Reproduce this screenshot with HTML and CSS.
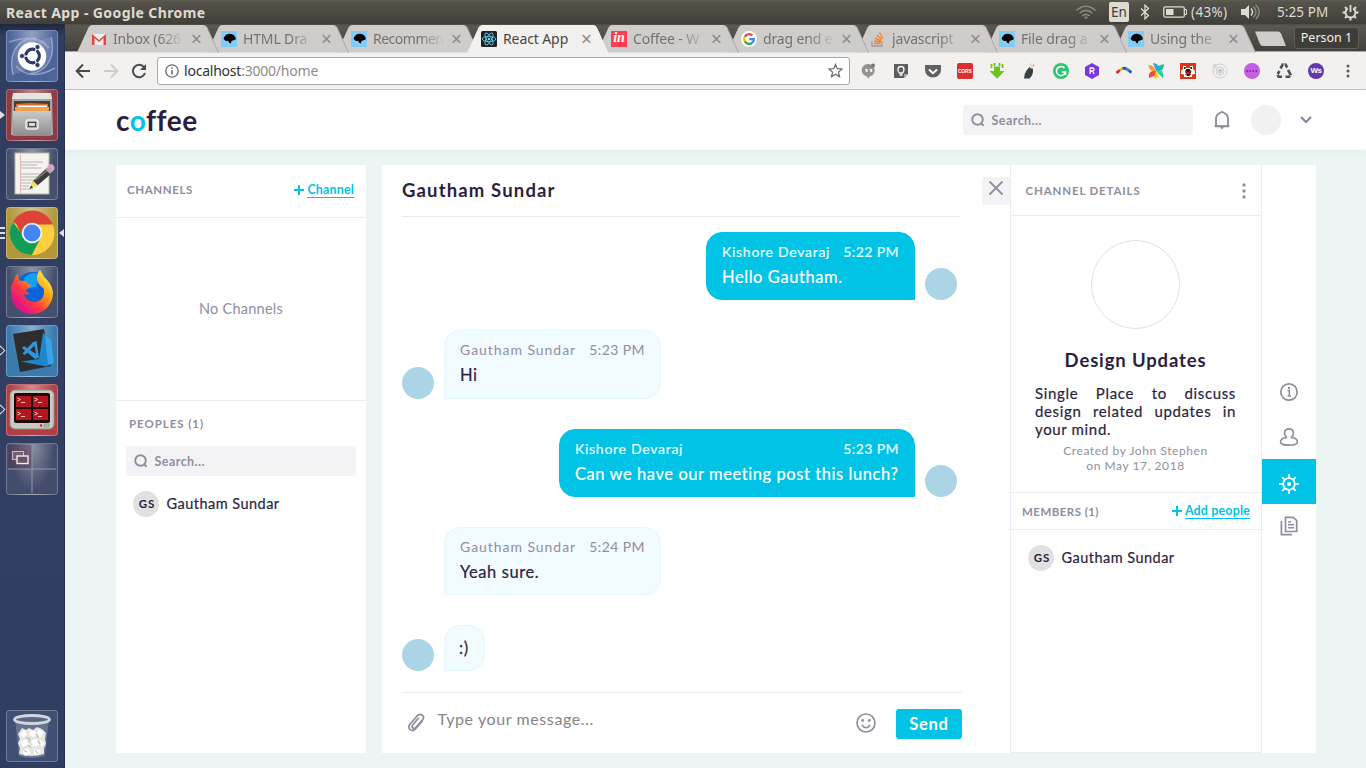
FILE: index.html
```html
<!DOCTYPE html>
<html lang="en">
<head>
<meta charset="utf-8">
<title>React App</title>
<link rel="stylesheet" href="styles.css">
</head>
<body>
<svg class="defs" aria-hidden="true">
  <symbol id="dino" viewBox="0 0 16 16"><rect width="16" height="16" fill="#83cbf7"/><path d="M2.500 7.500 4 5l2-1.700 3-.5 3.500 1 2 2.500.2 2.200-2.200.7-2 .8-.8 2.500-1.700-1-.8-1.800-2 .2-1.700-.8z" fill="#000"/></symbol>
  <symbol id="search" viewBox="0 0 14 14"><circle cx="6.500" cy="6.500" r="5.300" fill="none" stroke="#918e9e" stroke-width="1.900"/><path d="m10 10 2.600 2.800" stroke="#918e9e" stroke-width="1.900"/></symbol>
  <symbol id="plus" viewBox="0 0 10 10"><path d="M5 0v10M0 5h10" stroke="#00c3e6" stroke-width="2"/></symbol>
  <symbol id="tab" viewBox="0 0 142 28"><path d="M0 27.500 11.500 2.500Q12.700 0 15 0H126.500Q129 0 130 2.500L141.500 27.500z" fill="#cfcdcb"/><path d="M126.500.5Q129 .5 130 2.500L141.500 27.500" fill="none" stroke="#aaa8a5"/></symbol>
</svg>

<header class="sysbar">
  <span class="sysbar-title">React App - Google Chrome</span>
  <div class="sysbar-status">
    <svg class="st-wifi" width="22" height="16" viewBox="0 0 22 16" fill="none" stroke="#8b8982" stroke-width="1.500"><path d="M1.500 6.500Q11-2 20.500 6.500M4.500 9.300Q11 3.500 17.500 9.300M7.300 12Q11 8.800 14.700 12"/><path d="m9 13.200 2 2 2-2q-2-1.500-4 0z" fill="#8b8982" stroke="none"/></svg>
    <span class="lang">En</span>
    <svg class="st-bt" width="10" height="16" viewBox="0 0 10 16" fill="none" stroke="#dfdbd2" stroke-width="1.300"><path d="M1 4.500 8.500 11.500 5 14.800V1.200L8.500 4.500 1 11.500"/></svg>
    <svg class="st-bat" width="25" height="12" viewBox="0 0 25 12"><rect x=".8" y=".8" width="20.500" height="10.400" rx="1.500" fill="none" stroke="#dfdbd2" stroke-width="1.300"/><rect x="3" y="3" width="7.500" height="6" fill="#dfdbd2"/><path d="M22 3.500h1.500v5H22" fill="none" stroke="#dfdbd2"/></svg>
    <span class="st-pct">(43%)</span>
    <svg class="st-vol" width="20" height="16" viewBox="0 0 20 16"><path d="M0 5h4l4-4v14l-4-4H0z" fill="#dfdbd2"/><path d="M10 4.500q3 3.500 0 7" fill="none" stroke="#dfdbd2" stroke-width="1.400"/><path d="M12.500 2.500q5 5.500 0 11M15 1q6.500 7 0 14" fill="none" stroke="#8b8982" stroke-width="1.400"/></svg>
    <span class="st-time">5:25 PM</span>
    <svg class="st-gear" width="17" height="17" viewBox="0 0 17 17" fill="none" stroke="#dfdbd2"><path d="M5.800 4.300a5 5 0 1 0 5.400 0" stroke-width="2"/><path d="M8.500 1v7" stroke-width="1.800"/><path d="M.5 8.500H3M14 8.500h2.500M8.500 14v2.500M3 3l1.500 1.500M14 3l-1.500 1.500M3 14l1.500-1.500M14 14l-1.500-1.500" stroke-width="2"/></svg>
  </div>
</header>

<div class="desktop">
  <nav class="launcher">
    <div class="tile t-dash"><svg viewBox="0 0 52 52"><g fill="none" stroke="#b9c6e4" stroke-opacity=".55" stroke-width="1.500"><path d="M7 45C2 22 12 8 30 8M45 7C50 25 42 42 24 44M3 12q28-10 40 6M49 38q-25 14-39-2"/></g><path d="M7 45C2 22 12 8 30 8l-4 30z" fill="#fff" opacity=".13"/><path d="M45 7C50 25 42 42 24 44l2-30z" fill="#fff" opacity=".13"/><circle cx="26" cy="26.500" r="14.200" fill="#fff"/><circle cx="26.500" cy="26" r="6.800" fill="none" stroke="#2c3c66" stroke-width="3.200"/><path d="m26 26-9 .2M26.500 26l5-8.500M26.500 26l5 8.500" stroke="#fff" stroke-width="1.300"/><circle cx="26.500" cy="26" r="5" fill="#fff"/><g fill="#2c3c66" stroke="#fff" stroke-width=".7"><circle cx="16" cy="26" r="2.500"/><circle cx="31.500" cy="17" r="2.500"/><circle cx="31.500" cy="35" r="2.500"/></g></svg></div>
    <div class="tile t-files"><i class="run solid"></i><svg viewBox="0 0 52 52"><defs><linearGradient id="cab" x2="0" y2="1"><stop stop-color="#c9c9c7"/><stop offset="1" stop-color="#8d8d8b"/></linearGradient></defs><path d="M6 8h40l1 38H5z" fill="#a9a6a4"/><path d="M7 4h38l1 6H6z" fill="#e4e4e2"/><path d="M8 12h36v11H8z" fill="#42403e"/><path d="m10 15 14-1 18 1v8H10z" fill="#d8702a"/><path d="M9 18h34v5H9z" fill="#f1a04f"/><path d="M12 16.500h29v1.500H12z" fill="#fff"/><path d="M7 22h38v25H7z" fill="url(#cab)"/><rect x="20" y="31" width="12" height="9" rx="2" fill="#aaa" stroke="#eee" stroke-width="1.500"/><rect x="22.500" y="33.500" width="7" height="4" fill="#ddd" stroke="#444"/></svg></div>
    <div class="tile t-plain"><svg viewBox="0 0 52 52"><rect x="9" y="5" width="34" height="41" fill="#f5f3ee" stroke="#b8b6a8"/><path d="M14.500 5v41" stroke="#e8b5b5"/><path d="M15 14h22M15 17h16M15 20h20M15 26h21M15 29h18M15 32h14M15 35h10M15 38h8M15 41h12" stroke="#b5b5b5"/><path d="m25 39 2-6 14-13 5 5-14 12z" fill="#3c3c3a"/><path d="m29 32 13-10" stroke="#85857f" stroke-width="1.500"/><path d="m23.500 41 3.500-8.500 5 5z" fill="#e9dd77"/><path d="m23.500 41 1.500-3.500 2 2z" fill="#333"/><path d="m39.500 21.500 2.500-2.500 4.500 4.500-2.500 2.500z" fill="#aaa"/><path d="M42 19q3-4 5-1t-1 5z" fill="#df9ccc" stroke="#df9ccc" stroke-width="1.500"/></svg></div>
    <div class="tile t-chrome"><i class="run multi"></i><i class="focus"></i><svg viewBox="0 0 52 52"><circle cx="26" cy="26" r="22" fill="#ffcd40"/><path d="M26 26 6.900 15A22 22 0 0 1 46.700 17.500H26z" fill="#db4437"/><path d="M6.900 15A22 22 0 0 0 26 48l8.800-17L26 26 16 27z" fill="#0f9d58"/><path d="M26 48 35 31l11.700-13.500A22 22 0 0 1 26 48z" fill="#ffcd40"/><path d="M8.200 13 17 30l9-4V16z" fill="#db4437"/><circle cx="26" cy="26" r="10.300" fill="#f4f4f4"/><circle cx="26" cy="26" r="8.500" fill="#4285f4"/></svg></div>
    <div class="tile t-plain"><svg viewBox="0 0 52 52"><defs><linearGradient id="fx" x1=".9" y1=".1" x2=".2" y2=".8"><stop stop-color="#fff44f"/><stop offset=".4" stop-color="#ff980e"/><stop offset=".7" stop-color="#ff3b40"/><stop offset="1" stop-color="#e31587"/></linearGradient></defs><circle cx="27" cy="24" r="18" fill="#0a63d8"/><path d="M18 12q9-8 16-3l-4 12-10 2z" fill="#14a0ee"/><path d="M12 7q-1 6 3 8 5-1 6 2l4 2q-1 3-5 4 0 4 4 4-4 3-7 1 4 8 13 8 9-2 8-13-7-5-7-11 0-5 3-8 3 6 8 11 5 6 5 13A21 21 0 0 1 26 48 21 21 0 0 1 5 27q-1-8 3-12 1-5 4-8z" fill="url(#fx)"/></svg></div>
    <div class="tile t-code"><i class="run open"></i><svg viewBox="0 0 52 52"><path d="m7 9 31-5 7 37-31 6z" fill="#2d2d2d"/><path d="m37 8 8 6 3 24-8 3.500-25-5 18-2.500z" fill="#1f86cb"/><path d="m39 10 6 4 3 24-6 2z" fill="#3ba2e8"/><path d="M30.500 16 33 33l-4 1-13-11 2-2 12 8-1.500-8.500L19 30l-2.500-1.500L27 17z" fill="#2f96dc"/></svg></div>
    <div class="tile t-term"><i class="run open"></i><svg viewBox="0 0 52 52"><rect x="4" y="6" width="44" height="39" rx="5" fill="#c9c9c2" stroke="#8e8e88"/><rect x="8" y="9" width="36" height="30" rx="2" fill="#1a0a0a"/><g fill="#b3161c"><path d="M10 12h15v11H10zM27 12h15v11H27zM10 25h15v11H10zM27 25h15v11H27z"/></g><g fill="none" stroke="#f6c6c6"><path d="m11.500 14 3 1.500-3 1.500M15 18.500h4M28.500 14l3 1.500-3 1.500M32 18.500h4M11.500 28l3 1.500-3 1.500M15 32.500h4M28.500 28l3 1.500-3 1.500M32 32.500h4"/></g><circle cx="35" cy="41.500" r="1.200" fill="#e11"/><rect x="38" y="40" width="5" height="3" fill="#b5b5ae" stroke="#8e8e88" stroke-width=".6"/></svg></div>
    <div class="tile t-work"><svg viewBox="0 0 52 52"><path d="M2 2h24v24H2z" fill="#5a3350" opacity=".45"/><path d="M26 2v48M2 26h48" stroke="#9299ad"/><rect x="6.500" y="8.500" width="11" height="8" fill="#77606f" stroke="#c0bcc8"/><rect x="11" y="13" width="11" height="7.500" fill="#6b5262" stroke="#eee" stroke-width="1.400"/></svg></div>
    <div class="tile t-plain t-trash"><svg viewBox="0 0 52 52"><path d="m9 9 4 37q13 4 26 0l4-37z" fill="#a9b4c9" opacity=".35"/><path d="m12 24 4-6 4 2 3-2 4 2 4-3 5 2 4 4-1 6 1 5-2 4v6q-12 4-25 0l1-6-2-5 2-4z" fill="#e4e6e2"/><path d="m14 24 5-4 2 5-4 3zM24 20l6 2-2 5-5-2zM33 19l5 4-4 5-3-4zM14 32l6-3 3 5-6 3zM25 30l6-1 2 6-6 2zM34 30l5 3-4 4zM16 40l6-2 3 5-6 3zM28 39l7 1-3 5-4-1z" fill="#fff"/><path d="m20 27 4 2-1 3m8-8 1 4m-10 7 3 3m7-7 2 3m-17 6 4 2m8-2 3 4" fill="none" stroke="#b3b5b1"/><ellipse cx="26" cy="9.500" rx="17.500" ry="4" fill="#57658a" stroke="#d5d8d6" stroke-width="2.800"/></svg></div>
  </nav>

  <main class="browser">
    <div class="tabstrip">
      <div class="tab z9"><svg class="shape"><use href="#tab"/></svg><svg class="fav" viewBox="0 0 16 16"><path d="M1 3h14v11H1z" fill="#eee"/><path d="M1 14V3l7 6 7-6v11h-2.500V7L8 11 3.500 7v7z" fill="#dd4b39"/></svg><span>Inbox (626</span><b>×</b></div>
      <div class="tab z8"><svg class="shape"><use href="#tab"/></svg><svg class="fav"><use href="#dino"/></svg><span>HTML Dra</span><b>×</b></div>
      <div class="tab z7"><svg class="shape"><use href="#tab"/></svg><svg class="fav"><use href="#dino"/></svg><span class="w-rec">Recommen</span><b>×</b></div>
      <div class="tab active"><svg class="shape" viewBox="0 0 142 28"><path d="M0 28 11.500 2.500Q12.700 0 15 0H126.500Q129 0 130 2.500L141.500 28z" fill="#f2f1f0"/></svg><svg class="fav" viewBox="0 0 16 16"><rect width="16" height="16" rx="1.500" fill="#222"/><g fill="none" stroke="#61dafb" stroke-width=".8"><ellipse cx="8" cy="8" rx="6.800" ry="2.600"/><ellipse cx="8" cy="8" rx="6.800" ry="2.600" transform="rotate(60 8 8)"/><ellipse cx="8" cy="8" rx="6.800" ry="2.600" transform="rotate(120 8 8)"/></g><circle cx="8" cy="8" r="1.300" fill="#61dafb"/></svg><span>React App</span><b>×</b></div>
      <div class="tab z5"><svg class="shape"><use href="#tab"/></svg><i class="fav fav-in">in</i><span>Coffee - W</span><b>×</b></div>
      <div class="tab z4 narrow"><svg class="shape"><use href="#tab"/></svg><svg class="fav" viewBox="0 0 16 16"><circle cx="8" cy="8" r="8" fill="#fff"/><g fill="none" stroke-width="2.200"><path d="M11.400 4.500A4.900 4.900 0 0 0 3.700 5.800" stroke="#ea4335"/><path d="M3.700 5.800a4.900 4.900 0 0 0 0 4.500" stroke="#fbbc05"/><path d="M3.700 10.300a4.900 4.900 0 0 0 7.600 1.300" stroke="#34a853"/><path d="M11.300 11.600q1.700-1.500 1.600-3.400H8.200" stroke="#4285f4"/></g></svg><span>drag end e</span><b>×</b></div>
      <div class="tab z3 narrow"><svg class="shape"><use href="#tab"/></svg><svg class="fav" viewBox="0 0 16 16" fill="none"><path d="M2 10v5h10v-5" stroke="#9b9ea3" stroke-width="1.300"/><path d="M4 12.500h6.500M4.200 10l6.400 1M5 7l6 3M6.800 4l5 4.500M9.500 1.500l3.500 6" stroke="#f48024" stroke-width="1.400"/></svg><span>javascript</span><b>×</b></div>
      <div class="tab z2 narrow"><svg class="shape"><use href="#tab"/></svg><svg class="fav"><use href="#dino"/></svg><span>File drag a</span><b>×</b></div>
      <div class="tab z1 narrow"><svg class="shape"><use href="#tab"/></svg><svg class="fav"><use href="#dino"/></svg><span>Using the</span><b>×</b></div>
      <svg class="newtab" width="33" height="16" viewBox="0 0 33 16"><path d="M1 .5h23q2 0 3 2l5 12.500H9q-2 0-3-2z" fill="#cfcdcb"/></svg>
      <div class="person">Person 1</div>
    </div>

    <div class="toolbar">
      <div class="navs">
        <svg viewBox="0 0 16 16"><path d="M15 8H2M8 1.500 1.700 8 8 14.500" fill="none" stroke="#4a4a4a" stroke-width="2"/></svg>
        <svg viewBox="0 0 16 16"><path d="M1 8h13M8 1.500 14.300 8 8 14.500" fill="none" stroke="#cfcdcb" stroke-width="2"/></svg>
        <svg viewBox="0 0 16 16"><path d="M13 4.200A6.200 6.200 0 1 0 14 10" fill="none" stroke="#4a4a4a" stroke-width="2"/><path d="M15 1v6H9z" fill="#4a4a4a"/></svg>
      </div>
      <div class="omni">
        <svg width="14" height="14" viewBox="0 0 14 14"><circle cx="7" cy="7" r="6.200" fill="none" stroke="#6b6b6b" stroke-width="1.300"/><path d="M7 6v4.500M7 3.300v1.500" stroke="#6b6b6b" stroke-width="1.600"/></svg>
        <span class="url">localhost<em>:3000/home</em></span>
        <svg width="15" height="15" viewBox="0 0 16 16"><path d="m8 1.500 1.900 4.600 4.900.4-3.700 3.200 1.200 4.800L8 11.900l-4.300 2.600 1.200-4.800L1.200 6.500l4.900-.4z" fill="none" stroke="#6b6b6b" stroke-width="1.300"/></svg>
      </div>
      <div class="exts">
        <svg viewBox="0 0 16 16"><path d="M7.500 1a6.300 6.300 0 0 1 1 12.500L7.500 16 6 13.500A6.300 6.300 0 0 1 7.500 1z" fill="#939291"/><path d="M4 6h2.700v3H5zM8.500 6h2.700v3H9.500z" fill="#f2f1f0"/><circle cx="12" cy="2.500" r="2" fill="#777"/></svg>
        <svg viewBox="0 0 16 16"><path d="M1 1h14v10l-4 4H1z" fill="#5d5d5d"/><path d="m11 15 4-4h-4z" fill="#aaa"/><path d="M6.300 10Q4.500 8.500 5 6.500a3 3 0 0 1 6 0q0 2-1.500 3.500z" fill="none" stroke="#fff" stroke-width="1.300"/><path d="M6.500 12h3" stroke="#fff" stroke-width="1.500"/></svg>
        <svg viewBox="0 0 16 16"><path d="M0 2h16v5a8 7.500 0 0 1-16 0z" fill="#626263"/><path d="m4 6.500 4 3.700 4-3.700" fill="none" stroke="#fff" stroke-width="2"/></svg>
        <i class="cors">CORS</i>
        <svg viewBox="0 0 16 16"><path d="M5 3.500h6V8h4.500L8 15.800.5 8H5z" fill="#6cc51e"/><path d="M2.500 1v4M13.500 1v4M5.500 0v3M10.500 0v3" stroke="#6cc51e" stroke-width="1.800"/></svg>
        <svg viewBox="0 0 16 16"><path d="M8.500 4 12 5v3q0 4-3.500 7.500H3Q3 11 5.500 7.500z" fill="#384044"/><path d="M8 1.500q2-2.500 4 0V6L9 5z" fill="#e4dfd0"/><path d="m12 1.500 2 1-2 1z" fill="#d19d22"/></svg>
        <svg viewBox="0 0 16 16"><circle cx="8" cy="8" r="8" fill="#2fc56f"/><path d="M11.500 5A4.600 4.600 0 1 0 12.500 9H9M12.500 9v3" fill="none" stroke="#fff" stroke-width="1.500"/></svg>
        <svg viewBox="0 0 16 16"><path d="m8 0 7 4v8l-7 4-7-4V4z" fill="#7a36e0"/><path d="M6.200 11V5H8.500q1.500 0 1.500 1.500T8.500 8H6.500M8.500 8l1.700 3" fill="none" stroke="#fff" stroke-width="1.300"/></svg>
        <svg viewBox="0 0 16 16" fill="none" stroke-width="2.800"><path d="M.5 10 4 7" stroke="#d4302c"/><path d="m4 7 2.500-1.400" stroke="#f6b21b"/><path d="M6.500 5.600q2-.8 4 .4" stroke="#2156d9"/><path d="m10.500 6 2 1.200" stroke="#2fa04e"/><path d="m12.500 7.200 3 2.500" stroke="#1f5bd8"/></svg>
        <svg viewBox="0 0 16 16"><path d="M5 0q6 0 5 6L8 8z" fill="#2ea6d6"/><path d="m8 8 2-5 6-2q0 7-5 7z" fill="#19bbb4"/><path d="m8 8 6-.5q2 4 1 8z" fill="#2fd19a"/><path d="m8 8 3 6-4 2q-3-4 0-7z" fill="#ffcf1b"/><path d="m8 8-2 5-5 2q-1-6 4-7z" fill="#f7444e"/><path d="M8 8H4Q1 6 0 2q5 0 6 3z" fill="#f59b2d"/></svg>
        <svg viewBox="0 0 16 16"><rect width="16" height="16" fill="#db3616"/><path d="M3 3h3v2h4V3h3v3l2 2v3l-3 .5V14H4v-2.500L1 11V8l2-2z" fill="#fff"/><path d="M4 4h1.500v2H4zM10.500 4H12v2h-1.500zM6.500 6h3l2 2.500-2 4.500H7l-2-4.500z" fill="#2a0d08"/><path d="m5 8 6 4M11 8l-6 4" stroke="#db3616"/></svg>
        <svg viewBox="0 0 16 16" fill="none" stroke="#d0cfcf"><circle cx="8" cy="8" r="7"/><circle cx="8" cy="8" r="4"/><circle cx="8" cy="8" r="2" fill="#c5c4c4"/><circle cx="3" cy="3" r="1.500" fill="#ddd"/></svg>
        <svg viewBox="0 0 16 16"><circle cx="8" cy="8" r="8" fill="#c45fe4"/><path d="M2.500 8h11" stroke="#6d1e8e" stroke-width="1.500" stroke-dasharray="1.500 1.500"/></svg>
        <svg viewBox="0 0 16 16" fill="none" stroke="#4c525b" stroke-width="2.600"><path d="m4.500 5.500 2.200-4h2.800l1.700 3M12 7l2.500 4.500-1.300 2.200H9.500M6 13.700H2.600L1.400 11.500 3.500 8" stroke-dasharray="5.500 1"/></svg>
        <i class="ws">Ws</i>
        <svg viewBox="0 0 16 16" fill="#5a5a5a"><circle cx="8" cy="3" r="1.500"/><circle cx="8" cy="8" r="1.500"/><circle cx="8" cy="13" r="1.500"/></svg>
      </div>
    </div>

    <div class="app">
      <div class="app-head">
        <div class="logo">c<em>o</em>ffee</div>
        <div class="head-right">
          <div class="search"><svg width="14" height="14"><use href="#search"/></svg><span>Search...</span></div>
          <svg class="bell" width="16" height="20" viewBox="0 0 16 20"><path d="M2 16.200V8.500Q2 4 8 1.800 14 4 14 8.500v7.700z" fill="none" stroke="#918e9e" stroke-width="1.900"/><path d="M.5 16.200h15" stroke="#918e9e" stroke-width="1.600"/><path d="M6 17h4l-2 2.500z" fill="#918e9e"/></svg>
          <div class="me"></div>
          <svg class="chev" width="12" height="8" viewBox="0 0 12 8"><path d="m1 1 5 5 5-5" fill="none" stroke="#86839a" stroke-width="2"/></svg>
        </div>
      </div>

      <div class="cols">
        <aside class="side">
          <div class="side-head"><span class="cap">CHANNELS</span><span class="add"><svg width="10" height="10"><use href="#plus"/></svg><u>Channel</u></span></div>
          <div class="nochan">No Channels</div>
          <div class="peoples">
            <div class="cap">PEOPLES (1)</div>
            <div class="search"><svg width="14" height="14"><use href="#search"/></svg><span>Search...</span></div>
            <div class="person-row"><i>GS</i><span>Gautham Sundar</span></div>
          </div>
        </aside>

        <section class="chat">
          <div class="chat-top">
            <h1>Gautham Sundar</h1>
            <div class="close"><svg width="14" height="14" viewBox="0 0 14 14"><path d="m1 1 12 12M13 1 1 13" stroke="#918e9e" stroke-width="1.800" stroke-linecap="round"/></svg></div>
          </div>
          <div class="messages">
            <div class="msg mine"><div class="bubble w1"><p class="meta"><span>Kishore Devaraj</span><time>5:22 PM</time></p><p class="body">Hello Gautham.</p></div><i class="dot"></i></div>
            <div class="msg"><i class="dot"></i><div class="bubble w2"><p class="meta"><span>Gautham Sundar</span><time>5:23 PM</time></p><p class="body">Hi</p></div></div>
            <div class="msg mine"><div class="bubble w3"><p class="meta"><span>Kishore Devaraj</span><time>5:23 PM</time></p><p class="body">Can we have our meeting post this lunch?</p></div><i class="dot"></i></div>
            <div class="msg"><i class="dot none"></i><div class="bubble w2"><p class="meta"><span>Gautham Sundar</span><time>5:24 PM</time></p><p class="body">Yeah sure.</p></div></div>
            <div class="msg"><i class="dot"></i><div class="bubble w5"><p class="body">:)</p></div></div>
          </div>
          <div class="composer">
            <svg class="clip" width="18" height="20" viewBox="0 0 18 20"><path d="M14.800 8.500 8 16.300q-2.600 2.800-5.200.7t-.5-5.200L10 3q2.200-2.300 4.700-.6 2.600 2.200.6 4.600l-7 8q-1.500 1.500-2.900.4-1.500-1.300-.2-2.900l5.800-6.800" transform="translate(.4 .6)" fill="none" stroke="#918e9e" stroke-width="1.700" stroke-linecap="round"/></svg>
            <span class="ph">Type your message...</span>
            <svg class="smile" width="20" height="20" viewBox="0 0 20 20"><circle cx="10" cy="10" r="9" fill="none" stroke="#918e9e" stroke-width="1.700"/><circle cx="6.700" cy="7.500" r="1.400" fill="#918e9e"/><circle cx="13.300" cy="7.500" r="1.400" fill="#918e9e"/><path d="M5.800 12q4.200 5.500 8.400 0" fill="none" stroke="#918e9e" stroke-width="1.700"/></svg>
            <div class="send">Send</div>
          </div>
        </section>

        <section class="details">
          <div class="det-head"><span class="cap">CHANNEL DETAILS</span><svg width="4" height="16" viewBox="0 0 4 16" fill="#918e9e"><circle cx="2" cy="2" r="1.700"/><circle cx="2" cy="8" r="1.700"/><circle cx="2" cy="14" r="1.700"/></svg></div>
          <div class="det-info">
            <div class="ring"></div>
            <h2>Design Updates</h2>
            <p class="desc">Single Place to discuss design related updates in your mind.</p>
            <p class="created">Created by John Stephen<br>on May 17, 2018</p>
          </div>
          <div class="mem-head"><span class="cap">MEMBERS (1)</span><span class="add"><svg width="10" height="10"><use href="#plus"/></svg><u>Add people</u></span></div>
          <div class="person-row"><i>GS</i><span>Gautham Sundar</span></div>
        </section>

        <nav class="rail">
          <div><svg width="20" height="20" viewBox="0 0 20 20"><circle cx="10" cy="10" r="8.200" fill="none" stroke="#918e9e" stroke-width="1.700"/><path d="M8.500 8.500h1.800v5.500M8.500 14h3.500" fill="none" stroke="#918e9e" stroke-width="1.500"/><path d="M10 5v2" stroke="#918e9e" stroke-width="2"/></svg></div>
          <div><svg width="20" height="20" viewBox="0 0 20 20"><path d="M7.600 10.500Q5.500 8.500 5.500 5.700 6 1.800 10 1.800t4.500 3.900q0 2.800-2.100 4.800 6 .5 6 4.500 0 3.200-8.400 3.200T1.600 15q0-4 6-4.500z" fill="none" stroke="#918e9e" stroke-width="1.700" stroke-linejoin="round"/></svg></div>
          <div class="on"><svg width="20" height="20" viewBox="0 0 20 20" fill="none" stroke="#fff"><circle cx="10" cy="10" r="5.800" stroke-width="1.800"/><circle cx="10" cy="10" r="2" fill="#fff" stroke="none"/><path d="M10 0v4M10 16v4M0 10h4M16 10h4M3.200 3.200l2.500 2.500M14.300 14.300l2.500 2.500M16.800 3.200l-2.500 2.500M5.700 14.300l-2.500 2.500" stroke-width="1.700"/></svg></div>
          <div class="docs"><svg width="18" height="20" viewBox="0 0 18 20" fill="none" stroke="#918e9e" stroke-width="1.700"><path d="M5.500 1.300h7.800L16.700 4.500v11H5.500zM1.400 5v13.700H12"/><path d="M8 6h3M8 8.800h6M8 11.800h6" stroke-width="1.500"/></svg></div>
        </nav>
      </div>
    </div>
  </main>
</div>
</body>
</html>
```
FILE: styles.css
```css
* { box-sizing: border-box; margin: 0; padding: 0; }
body { width: 1366px; height: 768px; overflow: hidden; font-family: Lato, "Open Sans", sans-serif; color: #2b1f3f; }
svg { display: block; flex: none; }
i, em { font-style: normal; }
.defs { display: none; }

/* system bar */
.sysbar { height: 24px; display: flex; justify-content: space-between; align-items: center; padding: 0 7px 0 6px; background: linear-gradient(#5f5d51, #55534b 8%, #3f3e39); color: #dfdbd2; font: 14px "Noto Sans", "Open Sans", sans-serif; }
.sysbar-title { font-weight: 700; font-size: 14px; letter-spacing: .4px; }
.sysbar-status { display: flex; align-items: center; height: 24px; }
.lang { margin-left: 12px; width: 20px; height: 20px; border-radius: 2px; background: #dfdbd2; color: #3c3b37; font-size: 13.500px; line-height: 21px; text-align: center; }
.st-bt { margin-left: 11px; }
.st-bat { margin-left: 13px; }
.st-pct { margin-left: 3px; width: 38px; font-size: 13.500px; letter-spacing: .35px; white-space: nowrap; }
.st-vol { margin-left: 12px; }
.st-time { margin-left: 16px; width: 53px; font-size: 13.500px; letter-spacing: .1px; white-space: nowrap; }
.st-gear { margin-left: 12px; }

.desktop { display: flex; height: 744px; }

/* launcher */
.launcher { width: 65px; height: 744px; padding: 6px 0 6px 6px; display: flex; flex-direction: column; gap: 7px; background: linear-gradient(#20283f, #303c60 12px, #323e62 70%, #313d60); border-right: 1px solid #283250; }
.tile { position: relative; flex: none; width: 52px; height: 52px; border-radius: 4px; border: 1px solid rgba(255,255,255,.25); background: radial-gradient(ellipse at 50% 0, rgba(255,255,255,.4), rgba(255,255,255,0) 65%), #4b5471; }
.tile > svg { width: 52px; height: 52px; margin: -1px; }
.t-dash { background-color: #4d649b; }
.t-files { background-color: #8f3a45; }
.t-plain { background-color: #46506e; }
.t-chrome { background-color: #b3983b; }
.t-code { background-color: #3a7aad; }
.t-term { background-color: #b03f43; }
.t-work { background-color: #424c6c; }
.t-trash { margin-top: auto; background-color: #414f75; background-image: none; }
.run, .focus { position: absolute; top: 21px; }
.run { left: -7px; width: 5px; height: 8px; }
.solid { background: #dfdfdf; clip-path: polygon(0 0, 100% 50%, 0 100%); }
.open { left: -10px; width: 7px; height: 7px; transform: rotate(45deg); border: 1px solid #dfdfdf; }
.multi { top: 19px; height: 12px; background: repeating-linear-gradient(#dfdfdf 0 2px, transparent 2px 5px); }
.focus { right: -7px; width: 5px; height: 8px; background: #dfdfdf; clip-path: polygon(100% 0, 0 50%, 100% 100%); }

/* browser chrome */
.browser { width: 1301px; }
.tabstrip { height: 28px; padding: 1px 7px 0 12px; display: flex; background: linear-gradient(#4d4b42, #5a5850 2px, #42413b); border-bottom: 1px solid #aaa8a5; }
.tab { position: relative; flex: none; width: 130px; height: 28px; display: flex; align-items: center; padding: 0 0 1px 14px; font: 14px "Noto Sans", "Open Sans", sans-serif; color: #74726f; }
.narrow { width: 129px; }
.shape { position: absolute; left: 0; top: 0; width: 142px; height: 28px; z-index: -1; }
.z9 { z-index: 9; } .z8 { z-index: 8; } .z7 { z-index: 7; } .z5 { z-index: 5; } .z4 { z-index: 4; } .z3 { z-index: 3; } .z2 { z-index: 2; } .z1 { z-index: 1; }
.active { z-index: 10; color: #4a4846; }
.fav { width: 16px; height: 16px; flex: none; }
.fav-in { background: #ff3e52; color: #fff; font: italic 700 14px/14px "Liberation Serif", serif; text-align: center; }
.tab span { margin-left: 6px; width: 72px; white-space: nowrap; letter-spacing: -.15px; -webkit-mask-image: linear-gradient(90deg, #000 65%, transparent 100%); }
.tab .w-rec { letter-spacing: -.5px; }
.active span { -webkit-mask-image: none; letter-spacing: -.1px; }
.tab b { margin-left: 6px; width: 10px; font: 19px/20px "Noto Sans", sans-serif; color: #8b8987; }
.newtab { margin: 6px 0 0 11px; }
.person { margin: 2px 0 0 auto; width: 65px; height: 22px; border: 1px solid #5f5d55; border-radius: 3px; background: #3e3d38; color: #f3f1ec; font: 12.500px/20px "Noto Sans", "Open Sans", sans-serif; text-align: center; }
.toolbar { height: 38px; display: flex; align-items: center; padding: 1px 0 1px 10px; background: #f2f1f0; border-bottom: 1px solid #cbc9c7; }
.navs { display: flex; gap: 12px; width: 82px; }
.navs svg { width: 16px; height: 16px; }
.omni { width: 693px; height: 28px; border: 1px solid #aba9a7; border-radius: 3px; background: #fff; display: flex; align-items: center; padding: 0 6px 0 7px; }
.url { flex: 1; margin-left: 5px; font: 14px "Noto Sans", "Open Sans", sans-serif; letter-spacing: -.22px; color: #333; }
.url em { color: #8d8d8d; }
.exts { display: flex; gap: 15.930px; margin-left: 11px; }
.exts svg, .exts i { width: 16px; height: 16px; flex: none; }
.cors { border-radius: 2px; background: #d92f2f; color: #fff; font: 700 5px/16px "Liberation Sans", sans-serif; text-align: center; letter-spacing: -.2px; }
.ws { border-radius: 50%; background: #6437ad; color: #fff; font: 700 8px/16px "Liberation Sans", sans-serif; text-align: center; letter-spacing: -.5px; }

/* app */
.app { height: 678px; background: #edf4f4; }
.app-head { position: relative; height: 60px; background: #fff; box-shadow: 0 1px 6px rgba(40,80,90,.07); display: flex; justify-content: space-between; align-items: center; padding: 0 54px 0 51px; }
.logo { font-size: 28px; font-weight: 700; letter-spacing: .5px; line-height: 34px; }
.logo em { color: #00c3e6; }
.head-right { display: flex; align-items: center; }
.search { width: 230px; height: 30px; border-radius: 3px; background: #f3f3f6; display: flex; align-items: center; padding-left: 8px; font-size: 12.500px; font-weight: 700; color: #918e9e; }
.search span { margin-left: 6.500px; letter-spacing: .45px; padding-top: 1px; }
.bell { margin-left: 21px; }
.me { margin-left: 21px; width: 30px; height: 30px; border-radius: 50%; background: #f1f1f1; }
.chev { margin-left: 19px; }
.cols { display: flex; padding: 15px 50px 0 51px; height: 603px; }
.side { width: 250px; background: #fff; margin-right: 16px; }
.cap { font-size: 11.500px; font-weight: 700; color: #918e9e; letter-spacing: .6px; }
.add { display: flex; align-items: center; gap: 3px; color: #00c3e6; font-size: 12.500px; font-weight: 700; letter-spacing: .15px; }
.add u { text-decoration: none; border-bottom: 1px solid #00c3e6; line-height: 14px; padding-top: 1px; }
.side-head { height: 53px; border-bottom: 1px solid #edeef0; display: flex; align-items: center; justify-content: space-between; padding: 0 12px 3px 11px; }
.nochan { height: 183px; border-bottom: 1px solid #edeef0; display: flex; align-items: center; justify-content: center; font-size: 14.500px; color: #918e9e; letter-spacing: .25px; padding-bottom: 1px; }
.peoples { padding: 15px 10px 0; }
.peoples .cap { padding-left: 3px; line-height: 16px; letter-spacing: .95px; }
.peoples .search { margin-top: 14px; }
.person-row { display: flex; align-items: center; height: 26px; }
.person-row i { width: 26px; height: 26px; border-radius: 50%; background: #e1e1e1; font-size: 11.500px; font-weight: 700; line-height: 26px; text-align: center; letter-spacing: 1px; padding-left: 2px; }
.person-row span { margin-left: 7.500px; font-size: 14.500px; letter-spacing: .47px; padding-bottom: 2px; -webkit-text-stroke: .2px; }
.peoples .person-row { margin: 15px 0 0 7px; }

.chat { width: 628px; background: #fff; padding-left: 20px; }
.chat-top { display: flex; justify-content: space-between; height: 52px; }
.chat-top h1 { width: 557px; height: 52px; border-bottom: 1px solid #ebebf0; font-size: 18.500px; line-height: 51px; letter-spacing: 1.150px; }
.close { margin-top: 12px; width: 28px; height: 28px; background: #f3f3f6; border-radius: 2px; padding: 4px 0 0 7px; }
.messages { width: 555px; height: 475px; padding-top: 15px; }
.msg { display: flex; align-items: flex-end; gap: 10px; margin-bottom: 30px; }
.mine { justify-content: flex-end; }
.dot { flex: none; width: 32px; height: 32px; border-radius: 50%; background: #abd5e7; }
.none { visibility: hidden; }
.bubble { height: 68px; border: 1px solid #e3f8fd; border-radius: 16px 16px 16px 0; background: #f2fbff; padding: 9px 15px 0; }
.msg:nth-child(2) .bubble { height: 69px; }
.mine .bubble { border-color: #00c3e6; border-radius: 16px 16px 0 16px; background: #00c3e6; color: #fff; }
.w1 { width: 209px; } .w2 { width: 217px; } .w3 { width: 356px; }
.bubble.w5 { width: 41px; height: 46px; padding-top: 10px; }
.meta { display: flex; justify-content: space-between; font-size: 14px; line-height: 20px; color: #918e9e; letter-spacing: .4px; }
.meta span { letter-spacing: .95px; }
.mine .meta { color: #e9fbff; -webkit-text-stroke: .2px; }
.mine .meta span { letter-spacing: .72px; }
.body { font-size: 16.500px; line-height: 24px; margin-top: 3px; letter-spacing: .57px; white-space: nowrap; -webkit-text-stroke: .2px; }
.w5 .body { margin-top: 0; margin-left: -1px; }
.composer { width: 560px; border-top: 1px solid #ebebf0; display: flex; align-items: flex-start; padding: 16px 0 0 5px; }
.clip { margin-top: 3px; }
.ph { margin: -1px 0 0 12.500px; flex: 1; font-size: 16px; line-height: 22px; color: #85858a; letter-spacing: .6px; }
.smile { margin: 4px 20px 0 0; }
.send { width: 66px; height: 30px; border-radius: 3px; background: #00c3e6; color: #fff; font-size: 16.500px; font-weight: 700; line-height: 30px; text-align: center; letter-spacing: .7px; }

.details { width: 252px; background: #fff; border: 1px solid #ebebf0; border-top: 0; }
.det-head { height: 51px; border-bottom: 1px solid #ebebf0; display: flex; justify-content: space-between; align-items: center; padding: 1px 15px 0 14.500px; }
.det-head .cap { letter-spacing: .85px; }
.det-info { height: 277px; border-bottom: 1px solid #ebebf0; padding: 24px 25px 0 24px; text-align: center; }
.ring { width: 89px; height: 89px; margin: 0 auto; border: 1px solid #e1e0e6; border-radius: 50%; }
.det-info h2 { margin-top: 19px; font-size: 18.500px; line-height: 24px; letter-spacing: .85px; }
.desc { margin-top: 12px; font-size: 15px; line-height: 18px; text-align: justify; letter-spacing: .65px; -webkit-text-stroke: .2px; }
.created { margin-top: 5px; font-size: 12px; line-height: 15px; color: #918e9e; letter-spacing: .57px; }
.mem-head { height: 37px; border-bottom: 1px solid #ebebf0; display: flex; align-items: center; justify-content: space-between; padding: 0 11px; }
.mem-head .cap { letter-spacing: .45px; }
.details .person-row { margin: 15px 0 0 17px; }
.rail { width: 54px; background: #fff; padding-top: 204px; }
.rail div { height: 45px; display: flex; align-items: center; justify-content: center; }
.rail .on { background: #00c3e6; padding-top: 4px; }
.rail .docs { padding-bottom: 2px; }
```
